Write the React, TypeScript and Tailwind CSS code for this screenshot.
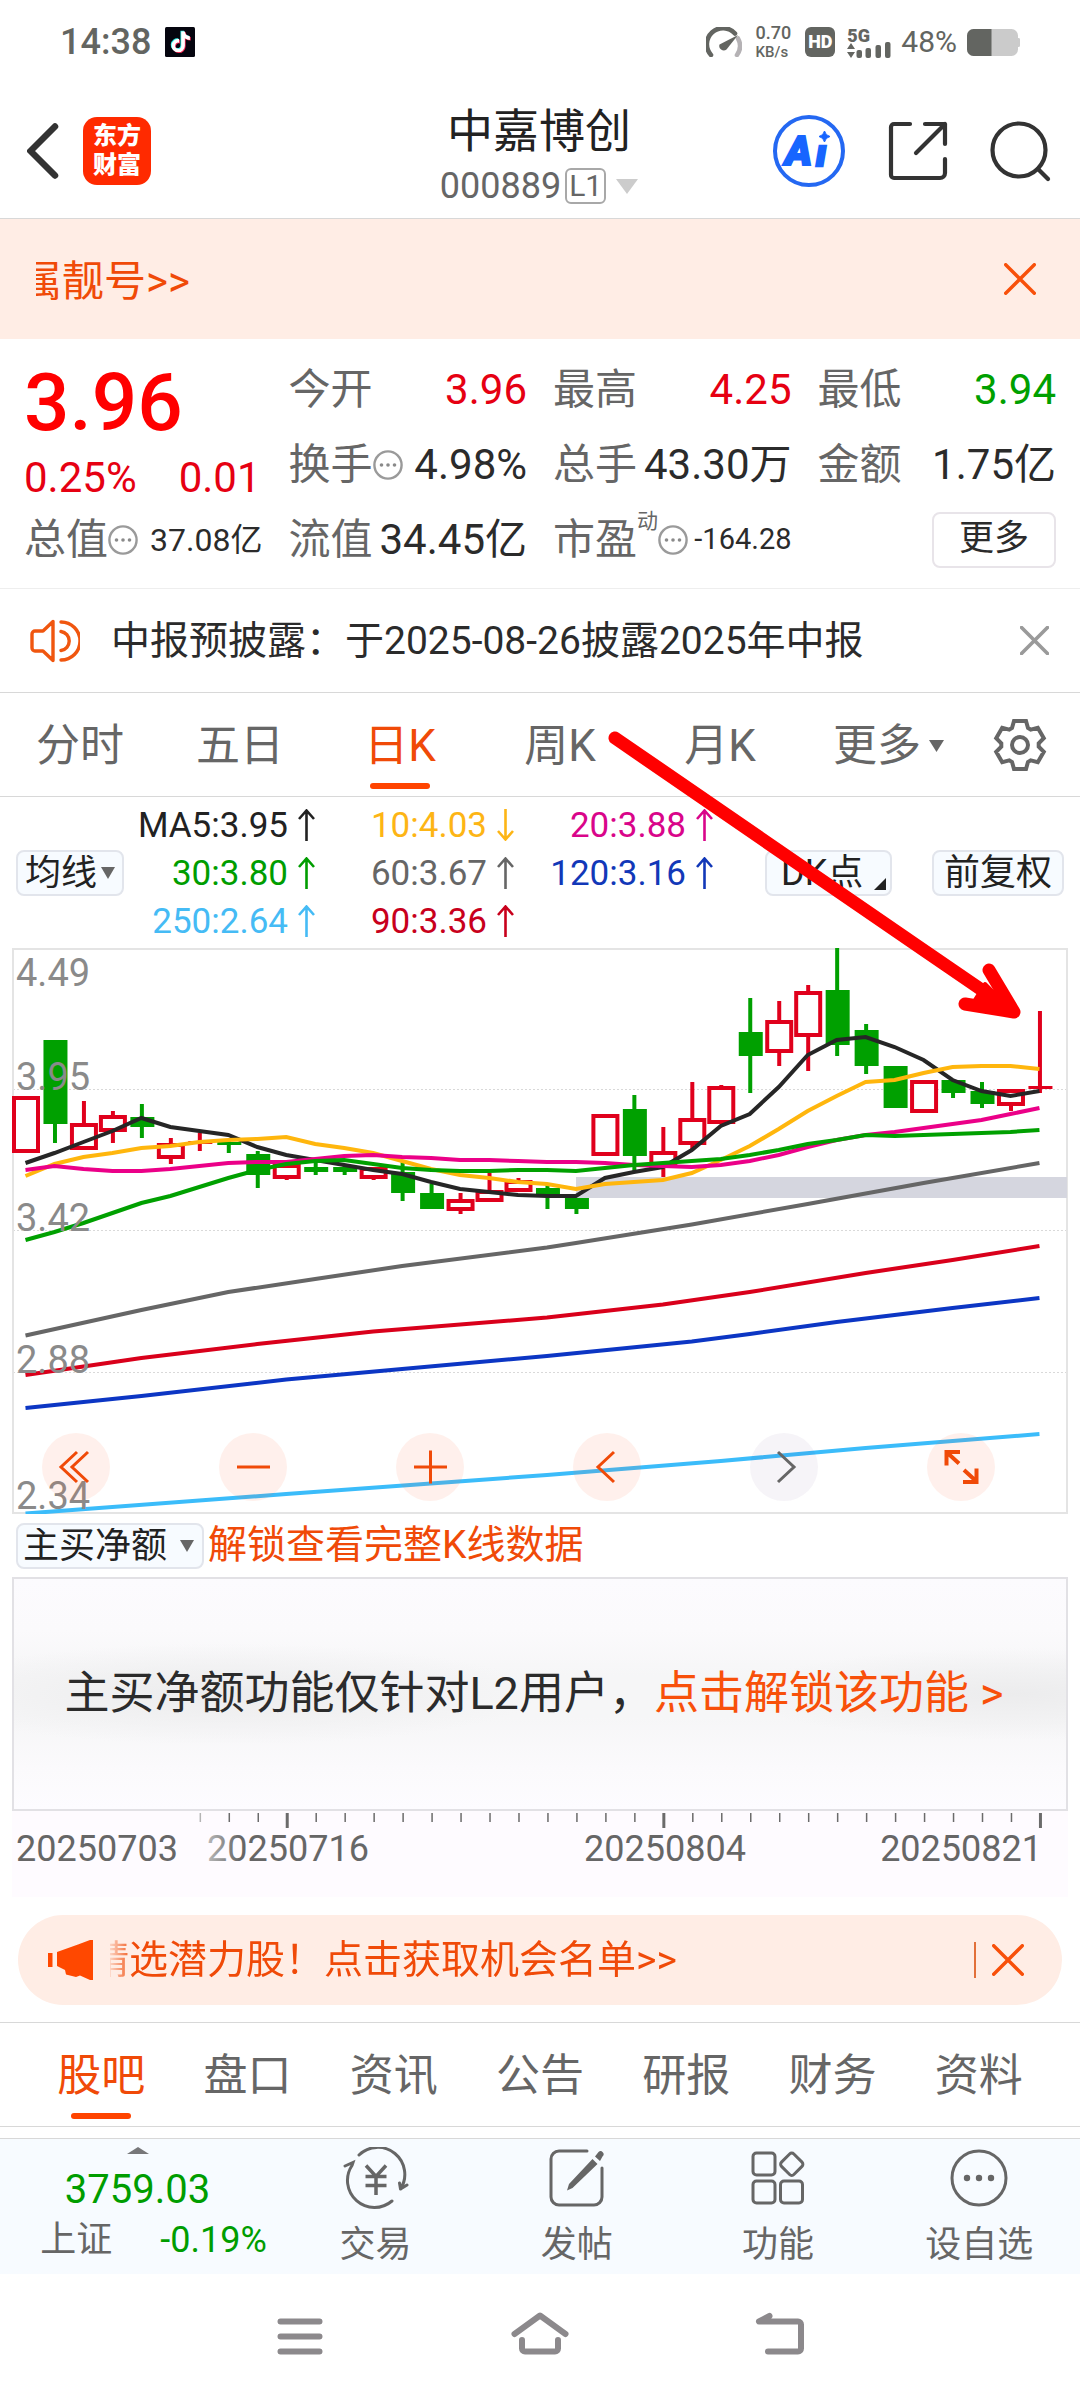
import type { ReactNode } from "react";
import { FaTiktok } from "react-icons/fa6";

type Candle = { up: boolean; top: number; bottom: number; high?: number; low?: number };

const FIRST_X = 25.5;
const STEP = 28.97;
const candleX = (i: number) => FIRST_X + i * STEP;

// up = hollow red body, otherwise a solid green one
const candles: Candle[] = [
  { up: true, top: 1096, bottom: 1153 },
  { up: false, top: 1040, bottom: 1124, low: 1143 },
  { up: true, top: 1123, bottom: 1150, high: 1101 },
  { up: true, top: 1115, bottom: 1132, high: 1111, low: 1143 },
  { up: false, top: 1117, bottom: 1127, high: 1104, low: 1138 },
  { up: true, top: 1143, bottom: 1159, high: 1138, low: 1164 },
  { up: true, top: 1141, bottom: 1144, high: 1133, low: 1151 },
  { up: false, top: 1142, bottom: 1145, high: 1140, low: 1153 },
  { up: false, top: 1154, bottom: 1175, high: 1151, low: 1188 },
  { up: true, top: 1164, bottom: 1179, low: 1180 },
  { up: false, top: 1167, bottom: 1172, high: 1162, low: 1175 },
  { up: false, top: 1167, bottom: 1172, high: 1164, low: 1175 },
  { up: true, top: 1167, bottom: 1179, low: 1180 },
  { up: false, top: 1172, bottom: 1193, high: 1162, low: 1201 },
  { up: false, top: 1193, bottom: 1209, high: 1184 },
  { up: true, top: 1199, bottom: 1211, high: 1193, low: 1214 },
  { up: true, top: 1190, bottom: 1202, high: 1173 },
  { up: true, top: 1180, bottom: 1192, high: 1178 },
  { up: false, top: 1188, bottom: 1194, high: 1183, low: 1209 },
  { up: false, top: 1198, bottom: 1209, low: 1214 },
  { up: true, top: 1114, bottom: 1156 },
  { up: false, top: 1109, bottom: 1156, high: 1095, low: 1171 },
  { up: true, top: 1151, bottom: 1168, high: 1127, low: 1177 },
  { up: true, top: 1118, bottom: 1145, high: 1082, low: 1149 },
  { up: true, top: 1086, bottom: 1124, high: 1085 },
  { up: false, top: 1032, bottom: 1056, high: 998, low: 1093 },
  { up: true, top: 1020, bottom: 1053, high: 1001, low: 1066 },
  { up: true, top: 991, bottom: 1037, high: 985, low: 1071 },
  { up: false, top: 990, bottom: 1045, high: 948, low: 1056 },
  { up: false, top: 1030, bottom: 1066, high: 1024, low: 1074 },
  { up: false, top: 1066, bottom: 1108 },
  { up: true, top: 1080, bottom: 1113 },
  { up: false, top: 1080, bottom: 1093, low: 1098 },
  { up: false, top: 1091, bottom: 1104, high: 1082, low: 1108 },
  { up: true, top: 1089, bottom: 1106, low: 1111 },
  { up: true, top: 1086, bottom: 1089, high: 1011, low: 1093 },
];

const ma5 = [1163, 1153, 1142, 1131, 1118, 1127, 1131, 1135, 1147, 1155, 1160, 1165, 1170, 1174, 1182, 1189, 1192, 1195, 1196, 1196, 1178, 1172, 1167, 1150, 1126, 1114, 1087, 1055, 1040, 1037, 1047, 1060, 1080, 1091, 1096, 1091];
const ma10 = [1176, 1164, 1157, 1153, 1148, 1146, 1142, 1140, 1139, 1137, 1144, 1148, 1153, 1161, 1169, 1175, 1178, 1182, 1184, 1189, 1184, 1182, 1180, 1173, 1160, 1146, 1129, 1111, 1096, 1082, 1080, 1073, 1067, 1066, 1066, 1069];
const ma20 = [1170, 1166, 1169, 1171, 1171, 1169, 1166, 1163, 1162, 1162, 1159, 1156, 1155, 1157, 1158, 1160, 1160, 1161, 1162, 1162, 1163, 1165, 1166, 1167, 1165, 1161, 1155, 1147, 1140, 1135, 1132, 1128, 1124, 1120, 1114, 1108];
const ma30 = [1240, 1232, 1223, 1213, 1203, 1196, 1187, 1178, 1170, 1164, 1161, 1160, 1164, 1168, 1170, 1171, 1171, 1170, 1170, 1171, 1168, 1165, 1163, 1161, 1159, 1155, 1150, 1144, 1140, 1135, 1136, 1135, 1134, 1133, 1132, 1130];

// slow averages only need a few [index, y] knots
const ma60: number[][] = [[0, 1335.5], [4, 1310], [7, 1292], [10, 1279], [13, 1266], [18, 1247.5], [19, 1243], [23, 1224.5], [27, 1204], [31, 1183], [35, 1163]];
const ma90: number[][] = [[0, 1375], [4, 1358], [8, 1344], [12, 1331.5], [18, 1317.5], [22, 1304.5], [25, 1292], [29, 1273], [32, 1260], [35, 1246]];
const ma120: number[][] = [[0, 1408], [4, 1396], [9, 1379.5], [13, 1369], [18, 1356], [23, 1341.5], [25, 1334], [28, 1322], [32, 1308], [35, 1298]];
const ma250: number[][] = [[0, 1513.5], [9, 1494], [18, 1475], [24, 1461], [29, 1448], [35, 1434]];

const dense = (ys: number[]) => ys.map((y, i) => `${candleX(i)},${y}`).join(" ");
const sparse = (pts: number[][]) => pts.map(([i, y]) => `${candleX(i)},${y}`).join(" ");

const lines = [
  { color: "#666666", points: sparse(ma60) },
  { color: "#d9001b", points: sparse(ma90) },
  { color: "#0c36c4", points: sparse(ma120) },
  { color: "#3bbcfa", points: sparse(ma250) },
  { color: "#262626", points: dense(ma5) },
  { color: "#ffb60d", points: dense(ma10) },
  { color: "#eb0088", points: dense(ma20) },
  { color: "#00a000", points: dense(ma30) },
];

const averages = [
  { text: "MA5:3.95", up: true, color: "text-[#222222]" },
  { text: "10:4.03", up: false, color: "text-[#fdb515]" },
  { text: "20:3.88", up: true, color: "text-[#d9058a]" },
  { text: "30:3.80", up: true, color: "text-[#009d00]" },
  { text: "60:3.67", up: true, color: "text-[#666666]" },
  { text: "120:3.16", up: true, color: "text-[#1238b8]" },
  { text: "250:2.64", up: true, color: "text-[#45bbf5]" },
  { text: "90:3.36", up: true, color: "text-[#c8001c]" },
];

const newsTabs = ["股吧", "盘口", "资讯", "公告", "研报", "财务", "资料"];

function InfoDot() {
  return (
    <svg className="h-[30px] w-[30px] shrink-0" viewBox="0 0 30 30" fill="none">
      <circle cx="15" cy="15" r="13.6" stroke="#9a9a9a" strokeWidth="2.4" />
      <g fill="#8a8a8a">
        <circle cx="8.5" cy="15" r="1.8" />
        <circle cx="15" cy="15" r="1.8" />
        <circle cx="21.5" cy="15" r="1.8" />
      </g>
    </svg>
  );
}

function Cross({ color, size = "h-8 w-8", width = 3.4 }: { color: string; size?: string; width?: number }) {
  return (
    <svg className={size} viewBox="0 0 32 32" fill="none" stroke={color} strokeWidth={width} strokeLinecap="round">
      <path d="M1.7 1.7l28.6 28.6M30.3 1.7L1.7 30.3" />
    </svg>
  );
}

function Caret({ className }: { className: string }) {
  return (
    <svg className={className} viewBox="0 0 15 12" preserveAspectRatio="none" fill="currentColor">
      <path d="M0 0h15L7.5 12z" />
    </svg>
  );
}

function Stat({ label, value, info, color = "text-[#2b2b2b]" }: { label: string; value: string; info?: boolean; color?: string }) {
  return (
    <div className="flex h-[75px] items-center justify-between">
      <span className="flex items-center text-[#666666]">
        {label}
        {info && <InfoDot />}
      </span>
      <span className={color}>{value}</span>
    </div>
  );
}

function StatusBar() {
  return (
    <div className="flex h-[84px] items-center pr-[60px] pl-[60px] text-[#636561]">
      <span className="text-[36px] font-medium">14:38</span>
      <svg className="ml-[14px] h-[30px] w-[30px]" viewBox="0 0 30 30">
        <rect width="30" height="30" rx="1.5" fill="#05050f" />
        <FaTiktok x="4.4" y="3.6" size="21" color="#2ff0ea" />
        <FaTiktok x="6" y="5" size="21" color="#fb2b58" />
        <FaTiktok x="5.2" y="4.3" size="21" color="#ffffff" />
      </svg>

      <svg className="ml-auto h-[30px] w-9" viewBox="0 0 36 30" fill="none">
        <path d="M5 28A15.5 15.5 0 0 1 29 6.5" stroke="#636561" strokeWidth="4.6" strokeLinecap="round" />
        <path d="M32 11.5A15.5 15.5 0 0 1 31 28" stroke="#b5b2b5" strokeWidth="4.6" strokeLinecap="round" />
        <path d="M32 8L20.5 22.5a4.5 4.5 0 0 1-7-5z" fill="#636561" />
      </svg>
      <span className="ml-[14px] flex flex-col gap-[3px] font-medium">
        <span className="text-[18px]">0.70</span>
        <span className="text-[15px]">KB/s</span>
      </span>
      <span className="ml-[14px] flex h-[30px] w-[30px] items-center justify-center rounded-[6px] bg-[#636561] text-[18px] font-black text-white">
        HD
      </span>
      <span className="ml-3 flex flex-col text-[18px] font-black">
        <span className="h-[15px]">5G</span>
        <svg className="h-4 w-11" viewBox="0 0 44 16" fill="currentColor">
          <path d="M0 7l4-6 4 6zM0 10l4 6 4-6z" />
          <rect x="9.5" y="8" width="5.5" height="8" rx="2" />
          <rect x="18.5" y="6" width="5.5" height="10" rx="2" />
          <rect x="28.5" y="3" width="5.5" height="13" rx="2" />
          <rect x="38" y="0" width="5.5" height="16" rx="2" />
        </svg>
      </span>
      <span className="ml-[10px] text-[30px]">48%</span>
      <svg className="ml-[10px] h-[27px] w-[53px]" viewBox="0 0 53 27">
        <rect width="51" height="27" rx="6.5" fill="#cbcbcb" />
        <path d="M50 9h1.5a1.5 1.5 0 0 1 1.5 1.5v6a1.5 1.5 0 0 1-1.5 1.500H50z" fill="#cbcbcb" />
        <path d="M24.5 0H6.5A6.5 6.5 0 0 0 0 6.5v14A6.5 6.5 0 0 0 6.5 27h18z" fill="#636561" />
      </svg>
    </div>
  );
}

function Header() {
  return (
    <header className="grid h-[135px] grid-cols-[1fr_auto_1fr] items-center border-b border-[#d8d8d8] pr-[29px] pl-[27px]">
      <div className="flex items-center gap-6">
        <button aria-label="返回">
          <svg className="h-14 w-8" viewBox="0 0 32 56" fill="none" stroke="#333333" strokeWidth="6.5" strokeLinecap="round">
            <path d="M28 3.5L3.5 28 28 52.5" />
          </svg>
        </button>
        <a href="#" className="flex h-[68px] w-[68px] flex-col items-center justify-center rounded-[14px] bg-[#ff2a00] text-[24px] leading-[29px] font-black text-white">
          <span>东方</span>
          <span>财富</span>
        </a>
      </div>

      <div className="flex flex-col items-center gap-[14px] pt-[10px]">
        <h1 className="text-[46px] text-[#222222]">中嘉博创</h1>
        <button className="flex items-center text-[36px] text-[#666666]">
          000889
          <span className="ml-1 flex h-9 w-[41px] items-center justify-center rounded-[6px] border-2 border-[#a8a8a8] text-[30px]">L1</span>
          <Caret className="ml-[10px] h-[15px] w-[22px] text-[#cccccc]" />
        </button>
      </div>

      <div className="flex items-center justify-end gap-[42px]">
        <button aria-label="AI">
          <svg className="h-[74px] w-[74px]" viewBox="0 0 74 74">
            <circle cx="37" cy="37" r="34" fill="none" stroke="#2468f2" strokeWidth="4" />
            <text x="13" y="51" fill="#1765ff" stroke="#1765ff" strokeWidth="2" fontSize="41" fontWeight="900" fontStyle="italic">A</text>
            <text x="44" y="52" fill="#1765ff" stroke="#1765ff" strokeWidth="2.5" fontSize="37" fontWeight="900" fontStyle="italic">ı</text>
            <path d="M52.5 17q1 4.500 5.500 5.500-4.500 1-5.500 5.500-1-4.500-5.500-5.500 4.500-1 5.500-5.500z" fill="#1765ff" stroke="#1765ff" />
          </svg>
        </button>
        <button aria-label="分享">
          <svg className="h-[60px] w-[60px]" viewBox="0 0 60 60" fill="none" stroke="#333333" strokeWidth="4.2" strokeLinecap="round" strokeLinejoin="round">
            <path d="M22 3H6a3 3 0 0 0-3 3v48a3 3 0 0 0 3 3h46a5 5 0 0 0 5-5V38M37 3h20v20M57 3L28 32" />
          </svg>
        </button>
        <button aria-label="搜索">
          <svg className="h-[61px] w-[61px]" viewBox="0 0 61 61" fill="none" stroke="#333333" strokeWidth="4.2" strokeLinecap="round">
            <circle cx="29" cy="29" r="26.5" />
            <path d="M48 48l10 10" />
          </svg>
        </button>
      </div>
    </header>
  );
}

function Quote() {
  return (
    <section className="grid grid-cols-4 gap-x-[26px] border-b border-[#eeeeee] px-6 pt-[13px] pb-[11px] text-[42px]">
      <div>
        <div className="flex h-[102px] items-center text-[80px] font-medium text-[#ff0000]">3.96</div>
        <div className="flex h-12 items-center gap-[42px] text-[#e60012]">
          <span>0.25%</span>
          <span>0.01</span>
        </div>
        <div className="flex h-[75px] items-center justify-between whitespace-nowrap">
          <span className="flex items-center text-[#666666]">
            总值
            <InfoDot />
          </span>
          <span className="text-[32px] text-[#2b2b2b]">37.08亿</span>
        </div>
      </div>
      <div>
        <Stat label="今开" value="3.96" color="text-[#e60012]" />
        <Stat label="换手" value="4.98%" info />
        <Stat label="流值" value="34.45亿" />
      </div>
      <div>
        <Stat label="最高" value="4.25" color="text-[#e60012]" />
        <Stat label="总手" value="43.30万" />
        <div className="flex h-[75px] items-center justify-between whitespace-nowrap">
          <span className="flex items-center text-[#666666]">
            市盈
            <span className="mb-9 text-[21px]">动</span>
            <InfoDot />
          </span>
          <span className="text-[29px] text-[#2b2b2b]">-164.28</span>
        </div>
      </div>
      <div>
        <Stat label="最低" value="3.94" color="text-[#00a000]" />
        <Stat label="金额" value="1.75亿" />
        <div className="flex h-[75px] items-center justify-end">
          <button className="h-14 w-[124px] rounded-[8px] border-2 border-[#e8e4e9] pb-[2px] text-[35px] text-[#2b2b2b]">更多</button>
        </div>
      </div>
    </section>
  );
}

function PeriodTabs() {
  return (
    <nav className="grid h-[104px] grid-cols-[repeat(6,minmax(0,1fr))_120px] border-b border-[#d8d8d8] text-[44px] text-[#666666]">
      <button className="pt-[2px]">分时</button>
      <button className="pt-[2px]">五日</button>
      <button className="relative pt-[2px] text-[#f04a08]">
        日K
        <span className="absolute inset-x-0 bottom-[7px] mx-auto h-[6px] w-[60px] rounded-full bg-[#ff4400]" />
      </button>
      <button className="pt-[2px]">周K</button>
      <button className="pt-[2px]">月K</button>
      <button className="flex items-center justify-end gap-2 pt-[2px] pr-4">
        更多
        <Caret className="h-3 w-[15px]" />
      </button>
      <button className="flex items-center justify-center" aria-label="设置">
        <svg className="h-[54px] w-[54px]" viewBox="-27 -27 54 54" fill="none" stroke="#666666" strokeWidth="4">
          <path d="M-6-24H6L8-17l2.700 1.600 7.100-1.800 6 10.400-5.100 5.200v3.200l5.100 5.200-6 10.400-7.100-1.800L8 17l-2 7H-6l-2-7-2.700-1.600-7.100 1.800-6-10.400 5.100-5.200v-3.200l-5.100-5.200 6-10.400 7.100 1.800L-8-17z" />
          <circle r="8" />
        </svg>
      </button>
    </nav>
  );
}

function Averages() {
  const chip = "flex h-[46px] items-center rounded-[8px] border-2 border-[#e2e5ec] bg-[#f7fbff] text-[36px] text-[#222222]";
  return (
    <section className="flex items-center px-4 pt-1 pb-[3px] text-[35px]">
      <label className={`${chip} w-[108px] justify-center`}>
        <select aria-label="指标" className="appearance-none bg-transparent">
          <option>均线</option>
        </select>
        <Caret className="ml-[3px] h-3 w-[14px] shrink-0 text-[#666666]" />
      </label>
      <div className="grid grid-cols-[191px_199px_199px]">
        {averages.map((a) => (
          <div key={a.text} className={`flex h-12 items-center justify-end gap-[10px] ${a.color}`}>
            {a.text}
            <svg className={a.up ? "h-8 w-[17px]" : "h-8 w-[17px] rotate-180"} viewBox="0 0 17 32" fill="none" stroke="currentColor" strokeWidth="2.6">
              <path d="M8.5 32V1.5M1 10l7.5-8.500L16 10" />
            </svg>
          </div>
        ))}
      </div>
      <button className={`${chip} relative ml-auto w-[127px] pl-[14px]`}>
        DK点
        <svg className="absolute right-1 bottom-1 h-3 w-3" viewBox="0 0 12 12" fill="#222222">
          <path d="M12 0v12H0z" />
        </svg>
      </button>
      <button className={`${chip} ml-10 w-[132px] justify-center`}>前复权</button>
    </section>
  );
}

function RoundButton({ label, muted, children }: { label: string; muted?: boolean; children: ReactNode }) {
  return (
    <button
      aria-label={label}
      className={muted ? "rounded-full bg-[#5f3f86]/6 text-[#666666]" : "rounded-full bg-[#ff5a28]/9 text-[#f04a08]"}
    >
      <svg className="h-[68px] w-[68px]" viewBox="0 0 68 68" fill="none" stroke="currentColor" strokeWidth="3">
        {children}
      </svg>
    </button>
  );
}

function KChart() {
  return (
    <div className="relative mx-3">
      <svg className="block w-full" viewBox="12 948 1056 566">
        <g stroke="#d9d9d9" strokeWidth="1" strokeDasharray="2 2">
          <path d="M13 1089.500H1067M13 1230.500H1067M13 1372.500H1067" />
        </g>
        <rect x="13" y="949" width="1054" height="564" fill="none" stroke="#e4e4e4" strokeWidth="2" />
        <rect x="576" y="1177" width="491" height="21" fill="#d5d6df" />

        {candles.map((c, i) => {
          const x = candleX(i);
          const color = c.up ? "#e0001c" : "#00a000";
          const flat = c.bottom - c.top < 5;
          return (
            <g key={i} stroke={color} strokeWidth="4">
              {c.high && <path d={`M${x + 0.5} ${c.high}V${c.top}`} />}
              {c.low && <path d={`M${x + 0.5} ${c.bottom}V${c.low}`} />}
              {c.up && !flat ? (
                <rect x={x - 11.5} y={c.top + 2} width="24" height={c.bottom - c.top - 4} fill="#ffffff" />
              ) : (
                <rect x={x - 11} y={c.top} width="24" height={c.bottom - c.top} fill={color} stroke="none" />
              )}
            </g>
          );
        })}

        {lines.map((l) => (
          <polyline key={l.color} points={l.points} fill="none" stroke={l.color} strokeWidth="4" />
        ))}

        <g fill="#8a8a8a" fontSize="38">
          <text x="16" y="986">4.49</text>
          <text x="16" y="1090">3.95</text>
          <text x="16" y="1231">3.42</text>
          <text x="16" y="1373">2.88</text>
          <text x="16" y="1509">2.34</text>
        </g>
      </svg>

      <div className="absolute inset-x-0 bottom-[13px] flex justify-between pr-[73px] pl-[30px]">
        <RoundButton label="最早">
          <path d="M35 19L19 34l16 15M46 19L30 34l16 15" />
        </RoundButton>
        <RoundButton label="缩小">
          <path d="M18 34h33" />
        </RoundButton>
        <RoundButton label="放大">
          <path d="M18 34h33M34.500 17.500v33" />
        </RoundButton>
        <RoundButton label="前移">
          <path d="M41 19L25 34l16 15" />
        </RoundButton>
        <RoundButton label="后移" muted>
          <path d="M28 19l16 15-16 15" />
        </RoundButton>
        <RoundButton label="全屏">
          <path d="M33 19H19.500v13.500M20 19.500l12 11M37 37l12 11M36 49h13.500V35.500" strokeWidth="4" />
        </RoundButton>
      </div>
    </div>
  );
}

function TimeAxis() {
  return (
    <svg className="mx-3 w-[calc(100%-24px)] bg-[#fefbff]" viewBox="12 1811 1056 86">
      <defs>
        <linearGradient id="dateFade" x1="209" x2="240" y1="0" y2="0" gradientUnits="userSpaceOnUse">
          <stop offset="0" stopColor="#b4b4b4" />
          <stop offset="1" stopColor="#666666" />
        </linearGradient>
      </defs>
      {candles.map((_, i) => {
        if (i < 6) return null;
        const major = i === 9 || i === 22 || i === 35;
        return (
          <path
            key={i}
            d={`M${candleX(i) + 1} 1813v${major ? 15 : 9}`}
            stroke={i === 6 ? "#b4b4b4" : "#6b6b6b"}
            strokeWidth={major ? 3 : 1.5}
          />
        );
      })}
      <g fill="#666666" fontSize="36">
        <text x="16" y="1861">20250703</text>
        <text x="288" y="1861" textAnchor="middle" fill="url(#dateFade)">20250716</text>
        <text x="665" y="1861" textAnchor="middle">20250804</text>
        <text x="1042" y="1861" textAnchor="end">20250821</text>
      </g>
    </svg>
  );
}

function BottomItem({ label, children }: { label: string; children: ReactNode }) {
  return (
    <button className="flex flex-1 flex-col items-center gap-[18px] pt-2 text-[36px]">
      <svg className="h-[62px] w-[66px]" viewBox="0 0 66 62" fill="none" stroke="#666666" strokeWidth="3" strokeLinecap="round">
        {children}
      </svg>
      {label}
    </button>
  );
}

function BottomBar() {
  return (
    <footer className="flex h-[136px] border-t border-[#d8d8d8] bg-[#f7fbff] text-[#666666]">
      <button className="flex w-[275px] flex-col items-center pt-2">
        <svg className="h-[7px] w-[22px]" viewBox="0 0 22 7" fill="#777779">
          <path d="M11 0l11 7H0z" />
        </svg>
        <span className="mt-4 text-[40px] text-[#009d00]">3759.03</span>
        <span className="mt-3 flex gap-12 pl-8 text-[36px]">
          上证
          <span className="text-[#009d00]">-0.19%</span>
        </span>
      </button>
      <BottomItem label="交易">
        <path d="M16 8A27 27 0 0 1 57.500 42M57.500 42l6.500-4M57.500 42l-1-6M2 19l8-3.500-1 3A27 27 0 0 0 49 54" />
        <path d="M23 18.500l10 11 10-11M33 29.500V48M22.500 29.500h21M22.500 38.500h21" strokeWidth="3.5" strokeLinecap="butt" />
      </BottomItem>
      <BottomItem label="发帖">
        <path d="M43 4H15a8 8 0 0 0-8 8v38a8 8 0 0 0 8 8h35a8 8 0 0 0 8-8V21" />
        <path d="M48.500 12l5 5-25 24-5.500 2.500 2-6.500zM51 9.500l3.500-4.500a2.800 2.800 0 0 1 4 4.500L56 14z" fill="#666666" stroke="none" />
      </BottomItem>
      <BottomItem label="功能">
        <rect x="8" y="6" width="22" height="22" rx="3.5" />
        <rect x="8" y="34" width="22" height="22" rx="3.5" />
        <rect x="35.5" y="34" width="22" height="22" rx="3.5" />
        <rect x="38" y="8.5" width="17.5" height="17.5" rx="3" transform="rotate(45 46.750 17.250)" />
      </BottomItem>
      <BottomItem label="设自选">
        <circle cx="33" cy="31" r="27" />
        <g fill="#666666" stroke="none">
          <circle cx="21" cy="31" r="3.2" />
          <circle cx="33" cy="31" r="3.2" />
          <circle cx="45" cy="31" r="3.2" />
        </g>
      </BottomItem>
    </footer>
  );
}

function SystemNav() {
  return (
    <div className="grid h-[126px] grid-cols-3 items-center px-[180px] pb-[6px]">
      <button aria-label="菜单" className="flex justify-center">
        <svg className="h-11 w-12" viewBox="0 0 48 44" stroke="#8c898c" strokeWidth="6" strokeLinecap="round">
          <path d="M4.500 9.500h39M4.500 24.500h39M4.500 39.500h39" />
        </svg>
      </button>
      <button aria-label="主页" className="flex justify-center">
        <svg className="h-11 w-[58px]" viewBox="0 0 58 44" fill="none" stroke="#8c898c" strokeWidth="6" strokeLinecap="round" strokeLinejoin="round">
          <path d="M3.500 22L29 3.500 54.500 22M11 28v8.500a3 3 0 0 0 3 3h30a3 3 0 0 0 3-3V28" />
        </svg>
      </button>
      <button aria-label="返回" className="flex justify-center">
        <svg className="h-11 w-[50px]" viewBox="0 0 50 44" fill="none" stroke="#8c898c" strokeWidth="6" strokeLinecap="round" strokeLinejoin="round">
          <path d="M14.500 4L4 9.500h39a3 3 0 0 1 3 3v24a3 3 0 0 1-3 3H13" />
        </svg>
      </button>
    </div>
  );
}

export default function App() {
  return (
    <div className="min-h-screen bg-white font-['Roboto','Noto_Sans_CJK_SC',sans-serif] leading-none *:leading-none">
      <StatusBar />
      <Header />

      {/* scrolling promo strip */}
      <div className="flex h-[120px] items-center justify-between bg-[#ffede5] pr-11 pl-9 text-[42px] text-[#f04a08]">
        <a href="#" className="overflow-hidden pt-[10px] pb-1">
          <span className="-ml-4">属靓号&gt;&gt;</span>
        </a>
        <button aria-label="关闭">
          <Cross color="#f8500a" />
        </button>
      </div>

      <Quote />

      <div className="flex h-[104px] items-center border-b border-[#d8d8d8] pr-[31px] pl-[30px]">
        <svg className="h-11 w-[50px]" viewBox="0 0 50 44" fill="none" stroke="#f0560f" strokeWidth="3.4" strokeLinecap="round" strokeLinejoin="round">
          <path d="M23 2.500v39L13 32H5a3 3 0 0 1-3-3V15a3 3 0 0 1 3-3h8zM31 12.500a9.600 9.600 0 0 1 0 19M31 3a19 19 0 0 1 0 38" />
        </svg>
        <a href="#" className="ml-[31px] pt-[2px] text-[39px] text-[#2b2b2b]">中报预披露：于2025-08-26披露2025年中报</a>
        <button aria-label="关闭" className="ml-auto">
          <Cross color="#9a9a9a" size="h-[29px] w-[29px]" width={4} />
        </button>
      </div>

      <div className="relative">
        <PeriodTabs />
        <Averages />
        <KChart />
        {/* hand-drawn marker pointing at the last candle */}
        <svg className="pointer-events-none absolute top-0 left-0 w-full" viewBox="0 693 1080 330" fill="none" stroke="#ff0000" strokeWidth="13" strokeLinecap="round" strokeLinejoin="round">
          <path d="M615 738L922 949L1014 1012M989 970L1014 1012L965 1004" />
          <path d="M985 984L1012 1011L975 1000z" fill="#ff0000" strokeWidth="4" />
        </svg>
      </div>

      <div className="flex h-[63px] items-center gap-1 px-4">
        <label className="flex h-[46px] items-center rounded-[8px] border-2 border-[#e2e5ec] bg-[#f7fbff] pr-2 pl-[5px] text-[36px] text-[#222222]">
          <select aria-label="副图指标" className="appearance-none bg-transparent">
            <option>主买净额</option>
          </select>
          <Caret className="ml-3 h-3 w-[14px] text-[#666666]" />
        </label>
        <a href="#" className="text-[39px] text-[#f04a08]">解锁查看完整K线数据</a>
      </div>

      <div className="mx-3 flex h-[234px] items-center justify-center border-2 border-[#e2e1e5] bg-[linear-gradient(to_bottom,#fcfbfe_0%,#fbfafc_22%,#f6f6f7_42%,#f6f6f7_60%,#fbfafc_82%,#fdfcff_100%)] text-[45px]">
        <div className="flex h-full w-full items-center justify-center bg-[radial-gradient(ellipse_30%_22%_at_20%_50%,#ececed,transparent),radial-gradient(ellipse_26%_20%_at_95%_50%,#ececed,transparent)] pr-3 pb-[2px]">
          <span className="text-[#2b2b2b]">主买净额功能仅针对L2用户，</span>
          <a href="#" className="text-[#f8500a]">点击解锁该功能 &gt;</a>
        </div>
      </div>
      <TimeAxis />

      {/* floating tip */}
      <div className="mx-[18px] mt-[18px] mb-[17px] flex h-[90px] items-center rounded-full bg-[#ffede5] pr-[38px] pl-[30px] text-[39px] text-[#f04a08]">
        <svg className="h-10 w-[45px]" viewBox="0 0 45 40" fill="#ff4800">
          <path d="M0 13h4.500v14H0zM9 12l21-7.500L42 0h3v40h-3l-10-4.500-4 1.500-10-2.500-1-4.500-8-4z" />
        </svg>
        <a href="#" className="ml-[17px] overflow-hidden [mask-image:linear-gradient(to_right,rgba(0,0,0,0.15),black_24px)] py-1">
          <span className="-ml-5">精选潜力股！点击获取机会名单&gt;&gt;</span>
        </a>
        <span className="ml-auto h-9 w-[2px] bg-[#e2703a]" />
        <button aria-label="关闭" className="ml-4">
          <Cross color="#f8500a" />
        </button>
      </div>

      <nav className="flex h-[105px] border-y border-[#d8d8d8] px-7 text-[44px] text-[#666666]">
        {newsTabs.map((t, i) => (
          <button key={t} className={i === 0 ? "relative flex-1 pt-[2px] text-[#f04a08]" : "flex-1 pt-[2px]"}>
            {t}
            {i === 0 && <span className="absolute inset-x-0 bottom-[7px] mx-auto h-[6px] w-[60px] rounded-full bg-[#ff4400]" />}
          </button>
        ))}
      </nav>
      <div className="h-[11px]" />
      <BottomBar />
      <SystemNav />
    </div>
  );
}
